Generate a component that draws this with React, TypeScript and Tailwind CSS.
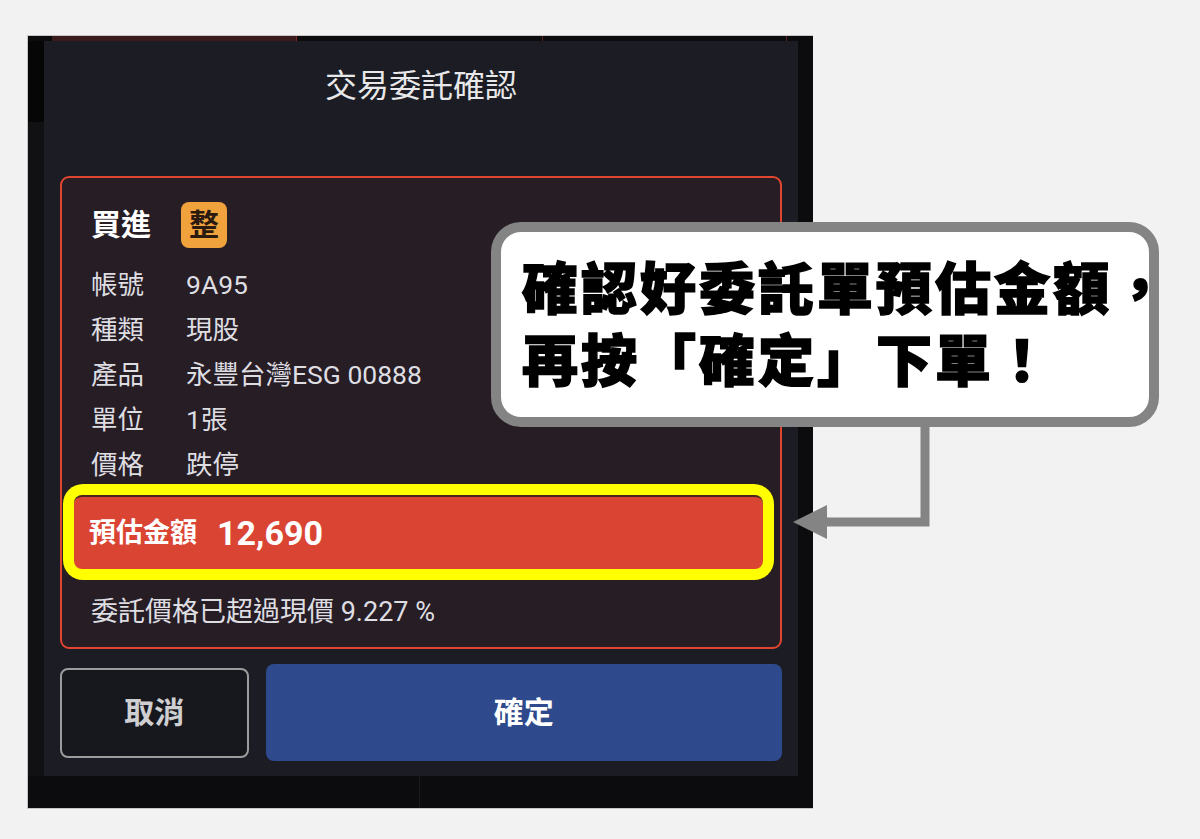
import React from "react";

const rows: [string, string][] = [
  ["帳號", "9A95"],
  ["種類", "現股"],
  ["產品", "永豐台灣ESG 00888"],
  ["單位", "1張"],
  ["價格", "跌停"],
];

export default function App() {
  return (
    <div
      className="relative w-[1200px] h-[839px] bg-[#f2f2f2] overflow-hidden"
      style={{ fontFamily: 'Roboto, "Noto Sans CJK TC", sans-serif' }}
    >
      <div className="pt-[35px] pl-[27px]">
        {/* dark phone frame */}
        <div className="w-[786px] h-[774px] bg-[#0c0c0e] border-l border-t border-b border-[#c6c6c6] flex flex-col">
          {/* top strip */}
          <div className="h-[5px] flex">
            <div className="w-[24px]" />
            <div className="w-[245px] bg-[#3a1a1c] border-r border-[#7a2a26]" />
            <div className="w-[246px] border-r border-[#5a2222]" />
            <div className="w-[244px] border-r border-[#5a2222]" />
          </div>
          <div className="flex">
            <div className="w-[16px] flex flex-col">
              <div className="h-[81px] bg-[#060607]" />
              <div className="flex-1 bg-[#111114]" />
            </div>
            {/* modal */}
            <div className="w-[754px] h-[735px] bg-[#1b1c24] px-4 flex flex-col">
              <div className="h-[135px] pt-[27px] text-center text-[32px] leading-[36px] text-[#e8e8ea]">
                交易委託確認
              </div>
              {/* red box */}
              <div className="h-[473px] border-2 border-[#e0452f] rounded-[9px] bg-[#271d25] flex flex-col pt-[24px]">
                <div className="h-[46px] flex items-center pl-[29px]">
                  <div className="w-[90px] text-[30px] font-bold text-white leading-none">買進</div>
                  <div className="w-[46px] h-[46px] rounded-[8px] bg-[#f0a23c] flex items-center justify-center text-[30px] font-bold text-[#2a1a10] leading-none">
                    整
                  </div>
                </div>
                <div className="mt-[14px] flex flex-col">
                  {rows.map(([k, v]) => (
                    <div key={k} className="h-[45px] flex items-center pl-[29px] text-[26.5px] text-[#dedee2]">
                      <div className="w-[95px]">{k}</div>
                      <div>{v}</div>
                    </div>
                  ))}
                </div>
                {/* highlight */}
                <div className="mt-[-3px] ml-[1px] w-[711px] h-[96px] rounded-[20px] bg-[#ffff00] p-[11px]">
                  <div className="h-full rounded-[8px] bg-[#da4433] border-t-2 border-[#4a2620] flex items-center pl-[15px]">
                    <span className="text-[27px] font-bold text-white leading-none">預估金額</span>
                    <span className="ml-[20px] text-[34px] font-bold text-white leading-none">12,690</span>
                  </div>
                </div>
                <div className="mt-[12px] h-[40px] flex items-center pl-[29px] text-[27px] text-[#dedee2]">
                  委託價格已超過現價 9.227 %
                </div>
              </div>
              {/* buttons */}
              <div className="mt-[15px] h-[97px] flex items-center gap-[17px]">
                <button className="w-[189px] h-[90px] rounded-[8px] border-2 border-[#9c9c9c] bg-[#17181e] text-[30px] font-bold text-[#cfcfd2]">
                  取消
                </button>
                <button className="w-[517px] h-[97px] rounded-[8px] bg-[#2e4a8c] text-[30px] font-bold text-white">
                  確定
                </button>
              </div>
            </div>
          </div>
          <div className="flex-1 flex">
            <div className="w-[392px] border-r border-[#1a1a1c]" />
          </div>
        </div>
      </div>

      {/* callout */}
      <div className="absolute left-[491px] top-[222px] w-[668px] h-[205px] rounded-[30px] border-[10px] border-[#848484] bg-white pt-[17px] pl-[21px]">
        <div
          className="whitespace-nowrap text-[56px] leading-[72px] font-black tracking-[3px] text-black [-webkit-text-stroke:1.5px_black]"
          style={{ fontFamily: '"Noto Sans CJK TC", sans-serif' }}
        >
          <div>確認好委託單預估金額，</div>
          <div>再按「確定」下單！</div>
        </div>
      </div>

      {/* arrow */}
      <svg className="absolute left-[785px] top-[420px]" width="155" height="125" viewBox="0 0 155 125">
        <path d="M140 4 V102 H40" fill="none" stroke="#848484" strokeWidth="9" strokeLinejoin="miter" />
        <polygon points="8,102 42,85 42,119" fill="#848484" />
      </svg>
    </div>
  );
}
